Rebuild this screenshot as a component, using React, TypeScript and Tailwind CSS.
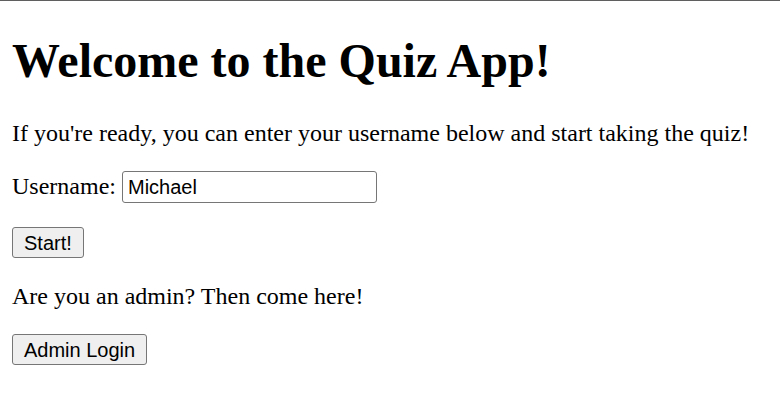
export default function App() {
  return (
    <div className="min-h-[400px] border-t border-[#5f5f5f] bg-white text-black">
      <div className="px-[12px] font-['Liberation_Serif',serif] text-[24px]">
        <h1 className="mb-[32px] mt-[32px] text-[48px] font-bold leading-[55px]">Welcome to the Quiz App!</h1>
        <p className="my-[24px] leading-[27px]">
          If you're ready, you can enter your username below and start taking the quiz!
        </p>
        <div className="my-[24px] flex items-baseline leading-[27px]">
          <label htmlFor="username">Username:</label>
          <input
            id="username"
            type="text"
            defaultValue="Michael"
            className="ml-[6px] h-[32px] w-[255px] rounded-[3px] border border-[#767676] px-[5px] font-['Liberation_Sans',Arial,sans-serif] text-[20px] text-black outline-none"
          />
        </div>
        <div className="flex">
          <button
            type="button"
            className="h-[31px] rounded-[3px] border border-[#767676] bg-[#efefef] px-[11px] pt-[1px] font-['Liberation_Sans',Arial,sans-serif] text-[20px] leading-none"
          >
            Start!
          </button>
        </div>
        <p className="my-[24px] leading-[28px]">Are you an admin? Then come here!</p>
        <div className="flex">
          <button
            type="button"
            className="h-[31px] rounded-[3px] border border-[#767676] bg-[#efefef] px-[11px] pt-[1px] font-['Liberation_Sans',Arial,sans-serif] text-[20px] leading-none"
          >
            Admin Login
          </button>
        </div>
      </div>
    </div>
  )
}
